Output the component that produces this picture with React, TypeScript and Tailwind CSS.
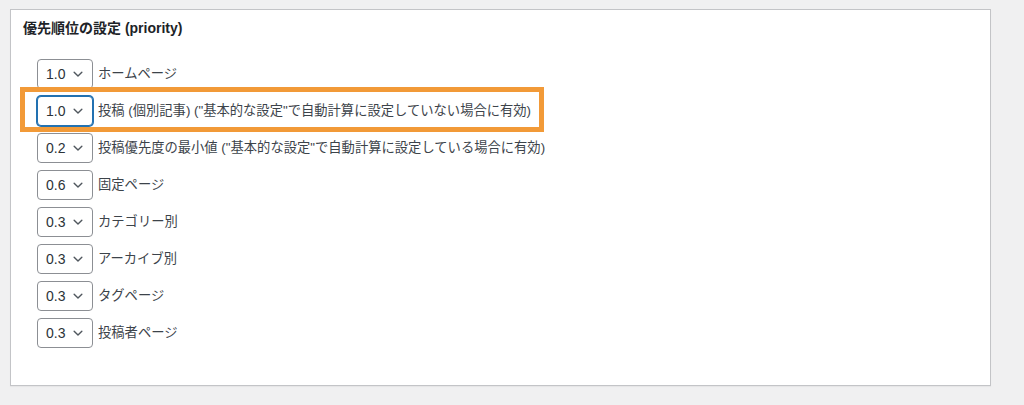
const rows = [
  { value: '1.0', label: 'ホームページ' },
  { value: '1.0', label: '投稿 (個別記事) ("基本的な設定"で自動計算に設定していない場合に有効)', focus: true },
  { value: '0.2', label: '投稿優先度の最小値 ("基本的な設定"で自動計算に設定している場合に有効)' },
  { value: '0.6', label: '固定ページ' },
  { value: '0.3', label: 'カテゴリー別' },
  { value: '0.3', label: 'アーカイブ別' },
  { value: '0.3', label: 'タグページ' },
  { value: '0.3', label: '投稿者ページ' },
];

const Chevron = () => (
  <svg width="14" height="14" viewBox="0 0 20 20" fill="none" className="shrink-0">
    <path d="M4.5 7.5l5.5 5.5 5.5-5.5" stroke="#50575e" strokeWidth="2" strokeLinecap="round" strokeLinejoin="round" />
  </svg>
);

const App = () => {
  return (
    <div
      className="w-[1024px] h-[405px] bg-[#f0f0f1] pt-[9px] pl-[10px] overflow-hidden"
      style={{ fontFamily: '"Liberation Sans", "Noto Sans CJK JP", sans-serif' }}
    >
      <div className="w-[981px] h-[377px] bg-white border border-[#c3c4c7] shadow-[0_1px_1px_rgba(0,0,0,0.04)] px-[12px] pt-[8px]">
        <h2 className="text-[14px] leading-[20px] font-bold text-[#1d2327]">優先順位の設定 (priority)</h2>
        <ul className="mt-[21px] pl-[14px] flex flex-col gap-[7px]">
          {rows.map((row, index) => (
            <li key={index} className="relative flex items-center gap-[5px] h-[30px]">
              {row.focus && (
                <div className="absolute -left-[17px] -top-[9px] w-[524px] h-[45px] border-[5px] border-[#f29a38] pointer-events-none"></div>
              )}
              <div
                className={`flex items-center justify-between w-[56px] h-[30px] rounded-[4px] bg-white pl-[8px] pr-[7px] text-[14px] text-[#2c3338] ${
                  row.focus
                    ? 'border border-[#2271b1] shadow-[0_0_0_1px_#2271b1]'
                    : 'border border-[#8c8f94]'
                }`}
              >
                <span>{row.value}</span>
                <Chevron />
              </div>
              <span className="text-[13.3px] leading-[20px] text-[#3c434a] whitespace-nowrap">{row.label}</span>
            </li>
          ))}
        </ul>
      </div>
    </div>
  );
};

export default App;
